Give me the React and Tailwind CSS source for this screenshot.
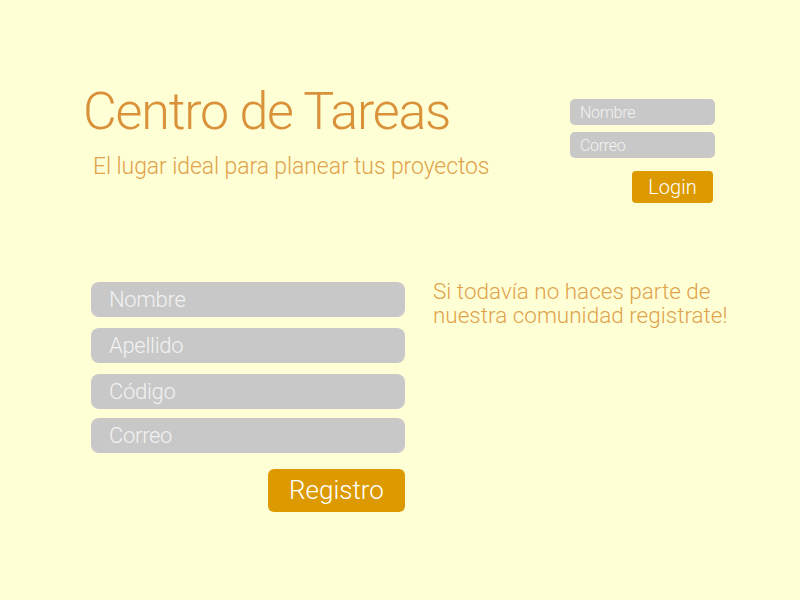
export default function App() {
  return (
    <div
      className="w-[800px] h-[600px] bg-[#ffffd5] font-light overflow-hidden"
      style={{ fontFamily: 'Roboto, "Liberation Sans", sans-serif' }}
    >
      {/* cabecera */}
      <div className="flex pt-[80px]">
        <div className="ml-[83px]">
          <h1 className="text-[52px] leading-[64px] tracking-[-1.2px] text-[#d9913a] font-light">Centro de Tareas</h1>
          <p className="ml-[10px] mt-[8px] text-[23px] leading-[30px] tracking-[-0.1px] text-[#e0a24c]">
            El lugar ideal para planear tus proyectos
          </p>
        </div>
        <div className="ml-auto mr-[85px] mt-[19px] w-[145px] flex flex-col gap-[7px]">
          <LoginInput placeholder="Nombre" />
          <LoginInput placeholder="Correo" />
          <button className="self-end mr-[2px] mt-[6px] w-[81px] h-[32px] rounded-[4px] bg-[#dd9900] text-white text-[20px] font-light">
            Login
          </button>
        </div>
      </div>

      {/* registro */}
      <div className="flex mt-[79px]">
        <div className="ml-[91px] w-[314px] flex flex-col gap-[11px]">
          <RegInput placeholder="Nombre" />
          <RegInput placeholder="Apellido" />
          <RegInput placeholder="Código" />
          <div className="-mt-[2px]">
            <RegInput placeholder="Correo" />
          </div>
          <button className="self-end mt-[5px] w-[137px] h-[43px] rounded-[6px] bg-[#dd9900] text-white text-[26px] font-light">
            Registro
          </button>
        </div>
        <p className="ml-[28px] -mt-[3px] text-[22.5px] leading-[24px] text-[#e0a24c]">
          Si todavía no haces parte de
          <br />
          nuestra comunidad registrate!
        </p>
      </div>
    </div>
  );
}

function LoginInput({ placeholder }) {
  return (
    <input
      placeholder={placeholder}
      className="w-full h-[26px] rounded-[5px] bg-[#c8c8c8] px-[10px] text-[16px] tracking-[-0.3px] text-white placeholder:text-[#f2f2f2] outline-none"
    />
  );
}

function RegInput({ placeholder }) {
  return (
    <input
      placeholder={placeholder}
      className="w-full h-[35px] rounded-[8px] bg-[#c8c8c8] px-[18px] text-[22px] tracking-[-0.3px] text-white placeholder:text-[#f2f2f2] outline-none"
    />
  );
}
